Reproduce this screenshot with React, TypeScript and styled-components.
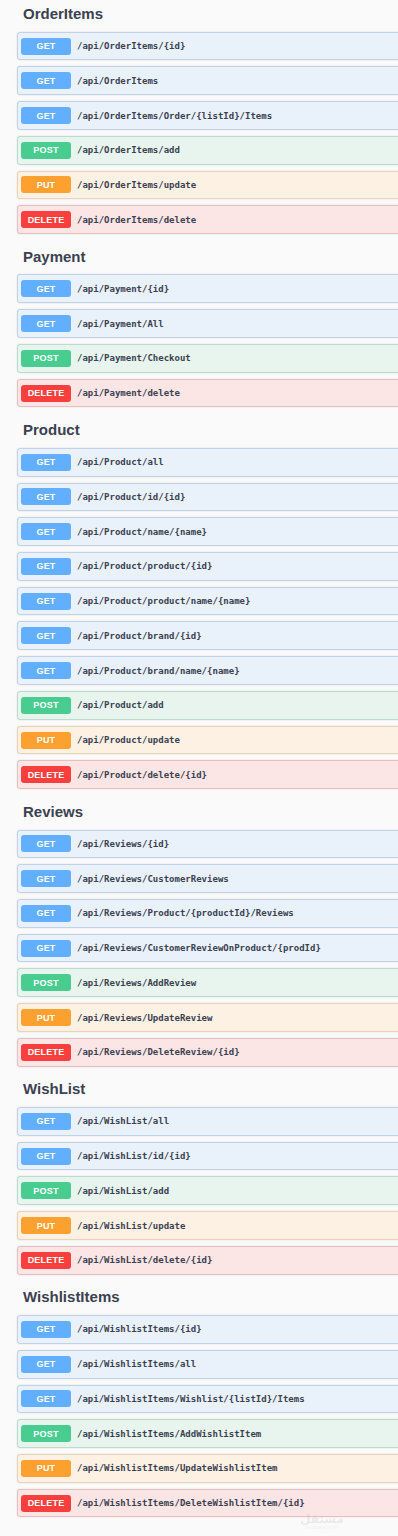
import { FC } from "react";
import styled, { createGlobalStyle } from "styled-components";

type Method = "GET" | "POST" | "PUT" | "DELETE";

const methodColors: Record<Method, { badge: string; bg: string; border: string }> = {
  GET: { badge: "#61affe", bg: "#e9f2fb", border: "#bfd2e6" },
  POST: { badge: "#49cc90", bg: "#e7f5ee", border: "#b9dccb" },
  PUT: { badge: "#fca130", bg: "#fdf1e4", border: "#ead2b6" },
  DELETE: { badge: "#f93e3e", bg: "#fbe5e5", border: "#e6c0c0" },
};

const sections: { title: string; ops: [Method, string][] }[] = [
  {
    title: "OrderItems",
    ops: [
      ["GET", "/api/OrderItems/{id}"],
      ["GET", "/api/OrderItems"],
      ["GET", "/api/OrderItems/Order/{listId}/Items"],
      ["POST", "/api/OrderItems/add"],
      ["PUT", "/api/OrderItems/update"],
      ["DELETE", "/api/OrderItems/delete"],
    ],
  },
  {
    title: "Payment",
    ops: [
      ["GET", "/api/Payment/{id}"],
      ["GET", "/api/Payment/All"],
      ["POST", "/api/Payment/Checkout"],
      ["DELETE", "/api/Payment/delete"],
    ],
  },
  {
    title: "Product",
    ops: [
      ["GET", "/api/Product/all"],
      ["GET", "/api/Product/id/{id}"],
      ["GET", "/api/Product/name/{name}"],
      ["GET", "/api/Product/product/{id}"],
      ["GET", "/api/Product/product/name/{name}"],
      ["GET", "/api/Product/brand/{id}"],
      ["GET", "/api/Product/brand/name/{name}"],
      ["POST", "/api/Product/add"],
      ["PUT", "/api/Product/update"],
      ["DELETE", "/api/Product/delete/{id}"],
    ],
  },
  {
    title: "Reviews",
    ops: [
      ["GET", "/api/Reviews/{id}"],
      ["GET", "/api/Reviews/CustomerReviews"],
      ["GET", "/api/Reviews/Product/{productId}/Reviews"],
      ["GET", "/api/Reviews/CustomerReviewOnProduct/{prodId}"],
      ["POST", "/api/Reviews/AddReview"],
      ["PUT", "/api/Reviews/UpdateReview"],
      ["DELETE", "/api/Reviews/DeleteReview/{id}"],
    ],
  },
  {
    title: "WishList",
    ops: [
      ["GET", "/api/WishList/all"],
      ["GET", "/api/WishList/id/{id}"],
      ["POST", "/api/WishList/add"],
      ["PUT", "/api/WishList/update"],
      ["DELETE", "/api/WishList/delete/{id}"],
    ],
  },
  {
    title: "WishlistItems",
    ops: [
      ["GET", "/api/WishlistItems/{id}"],
      ["GET", "/api/WishlistItems/all"],
      ["GET", "/api/WishlistItems/Wishlist/{listId}/Items"],
      ["POST", "/api/WishlistItems/AddWishlistItem"],
      ["PUT", "/api/WishlistItems/UpdateWishlistItem"],
      ["DELETE", "/api/WishlistItems/DeleteWishlistItem/{id}"],
    ],
  },
];

const GlobalStyle = createGlobalStyle`
  html, body {
    margin: 0;
    background: #fafafa;
    overflow-x: hidden;
  }
`;

const Page = styled.main`
  position: relative;
  display: flex;
  flex-direction: column;
  padding: 0 0 0 17px;
  height: 1536px;
  box-sizing: border-box;
  font-family: "Liberation Sans", Arial, sans-serif;
  color: #3b4151;
`;

const Section = styled.section`
  display: flex;
  flex-direction: column;
  margin-bottom: 8.7px;
`;

const Heading = styled.h3`
  margin: 0 0 3.7px;
  padding-left: 6px;
  height: 28px;
  line-height: 28px;
  font-size: 15px;
  font-weight: 700;
  color: #3b4151;
`;

const OpList = styled.div`
  display: flex;
  flex-direction: column;
  gap: 6px;
`;

const OpRow = styled.div<{ $method: Method }>`
  display: flex;
  align-items: center;
  gap: 6px;
  height: 28.74px;
  box-sizing: border-box;
  margin-right: -12px;
  padding-left: 3px;
  border: 1px solid ${(p) => methodColors[p.$method].border};
  border-radius: 3px;
  background: ${(p) => methodColors[p.$method].bg};
  box-shadow: 0 0 2px rgba(0, 0, 0, 0.12);
`;

const Badge = styled.span<{ $method: Method }>`
  display: flex;
  align-items: center;
  justify-content: center;
  flex: none;
  width: 50px;
  height: 17px;
  border-radius: 3px;
  background: ${(p) => methodColors[p.$method].badge};
  color: #fff;
  font-size: 9px;
  font-weight: 700;
  letter-spacing: 0.2px;
`;

const Path = styled.span`
  font-family: "DejaVu Sans Mono", "Liberation Mono", monospace;
  font-size: 9px;
  font-weight: 700;
  color: #3b4151;
  white-space: nowrap;
`;

const Watermark = styled.div`
  position: absolute;
  right: 54px;
  bottom: 6px;
  display: flex;
  flex-direction: column;
  align-items: center;
  color: rgba(120, 120, 120, 0.12);
  font-family: "DejaVu Sans", sans-serif;
  line-height: 1;
  & b {
    font-size: 12px;
  }
  & small {
    font-size: 5px;
  }
`;

const App: FC = () => (
  <>
    <GlobalStyle />
    <Page>
      {sections.map((s) => (
        <Section key={s.title}>
          <Heading>{s.title}</Heading>
          <OpList>
            {s.ops.map(([m, path]) => (
              <OpRow key={m + path} $method={m}>
                <Badge $method={m}>{m}</Badge>
                <Path>{path}</Path>
              </OpRow>
            ))}
          </OpList>
        </Section>
      ))}
      <Watermark>
        <b>مستقل</b>
        <small>mostaql.com</small>
      </Watermark>
    </Page>
  </>
);

export default App;
